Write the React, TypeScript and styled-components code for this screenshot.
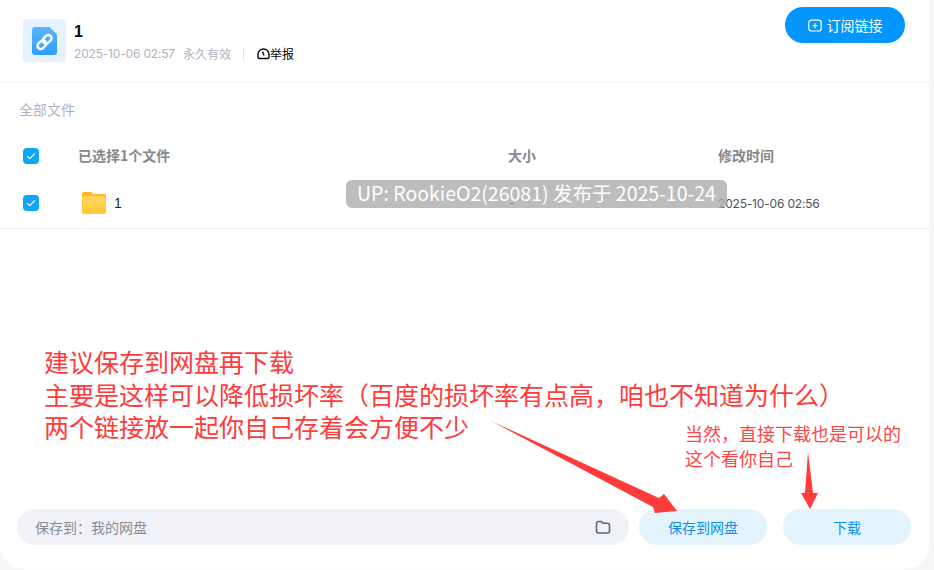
import React from "react";
import styled, { createGlobalStyle } from "styled-components";

const Global = createGlobalStyle`
  html, body { margin: 0; padding: 0; background: #f7f7f8; }
  body { font-family: "Noto Sans CJK SC", "Liberation Sans", sans-serif; }
  * { box-sizing: border-box; }
`;
const Page = styled.div`
  position: relative;
  width: 934px;
  height: 570px;
  overflow: hidden;
`;
const Card = styled.div`
  width: 929px;
  height: 569px;
  background: #fff;
  border-radius: 0 0 24px 24px;
  display: flex;
  flex-direction: column;
`;
const Header = styled.header`
  height: 83px;
  flex: none;
  border-bottom: 1px solid #f1f2f7;
  padding: 19px 24px 0 23px;
  display: flex;
  align-items: flex-start;
  gap: 8px;
`;
const Tile = styled.div`
  width: 43px;
  height: 43px;
  flex: none;
  border-radius: 4px;
  background: #e4f3ff;
  display: flex;
  align-items: center;
  justify-content: center;
`;
const Info = styled.div`
  flex: 1;
  display: flex;
  flex-direction: column;
`;
const Title = styled.div`
  font: 700 16px/20px "Liberation Sans", sans-serif;
  color: #06070a;
  margin-top: 3px;
`;
const Meta = styled.div`
  margin-top: 4px;
  display: flex;
  align-items: center;
  font-size: 12px;
  line-height: 16px;
  color: #afb3bf;
`;
const MetaDate = styled.span`
  font-family: "Inter", "Noto Sans CJK SC", sans-serif;
  letter-spacing: -0.18px;
  margin-right: 8px;
`;
const Divider = styled.i`
  width: 1px;
  height: 12px;
  background: #e0e2e8;
  margin: 0 13px 0 12px;
`;
const Report = styled.span`
  color: #06070a;
  display: inline-flex;
  align-items: center;
`;
const Subscribe = styled.button`
  width: 120px;
  height: 36px;
  margin-top: -12px;
  border: 0;
  border-radius: 18px;
  background: #0396ff;
  color: #fff;
  font: 400 14px "Noto Sans CJK SC", sans-serif;
  display: flex;
  align-items: center;
  justify-content: center;
  gap: 5px;
  padding: 0;
`;
const Crumb = styled.div`
  padding: 16px 0 0 19px;
  height: 54px;
  flex: none;
  font-size: 14px;
  line-height: 20px;
  color: #afb3bf;
`;
const Row = styled.div<{ $h: number; $top?: number; $line?: boolean }>`
  height: ${(p) => p.$h}px;
  flex: none;
  display: grid;
  grid-template-columns: 55px 430px 210px 1fr;
  align-items: center;
  padding: ${(p) => p.$top ?? 0}px 0 0 23px;
  ${(p) => (p.$line ? "border-bottom: 1px solid #f1f2f7;" : "")}
`;
const Check = styled.span`
  width: 16px;
  height: 16px;
  border-radius: 4px;
  background: #0ea5fb;
  display: flex;
  align-items: center;
  justify-content: center;
`;
const HeadCell = styled.div`
  font-size: 14px;
  line-height: 20px;
  font-weight: 700;
  color: #85888f;
  margin-top: -1px;
`;
const NameCell = styled.div`
  display: flex;
  align-items: center;
  gap: 8px;
  padding-left: 4px;
  font: 400 14px "Liberation Sans", sans-serif;
  color: #1f2433;
`;
const FileName = styled.span`
  margin-top: -1px;
`;
const SizeCell = styled.div`
  font: 400 12px "Liberation Sans", sans-serif;
  color: #1f2433;
  padding-left: 2px;
`;
const TimeCell = styled.div`
  font: 400 12px "Inter", sans-serif;
  letter-spacing: -0.18px;
  color: #4c5364;
`;
const Spacer = styled.div`
  flex: 1;
`;
const Footer = styled.footer`
  height: 60px;
  flex: none;
  padding: 0 18px 24px 17px;
  display: flex;
  align-items: stretch;
`;
const PathBox = styled.div`
  flex: 1;
  border-radius: 18px;
  background: #f1f2f7;
  display: flex;
  align-items: center;
  justify-content: space-between;
  padding: 0 18px;
  font-size: 14px;
  color: #878b96;
`;
const Action = styled.button<{ $gap: number }>`
  width: 128px;
  margin-left: ${(p) => p.$gap}px;
  border: 0;
  border-radius: 18px;
  background: #e3f4ff;
  color: #0a8cf0;
  font: 400 14px "Noto Sans CJK SC", sans-serif;
  padding: 0;
`;
const Watermark = styled.div`
  position: absolute;
  left: 346px;
  top: 180px;
  width: 381px;
  height: 28px;
  border-radius: 6px;
  background: rgba(170, 170, 170, 0.78);
  color: #fff;
  font: 400 19.5px/25px "Noto Sans CJK SC", sans-serif;
  text-align: center;
  white-space: nowrap;
`;
const NoteBig = styled.div`
  position: absolute;
  left: 44px;
  top: 345px;
  font-size: 25px;
  font-weight: 400;
  line-height: 32.5px;
  color: #ff3b3b;
  white-space: nowrap;
`;
const NoteSmall = styled.div`
  position: absolute;
  left: 685px;
  top: 421px;
  font-size: 18px;
  font-weight: 400;
  line-height: 24.5px;
  color: #ff4444;
  white-space: nowrap;
`;
const Arrows = styled.svg`
  position: absolute;
  left: 0;
  top: 0;
  pointer-events: none;
`;

const Tick = () => (
  <svg width="10" height="8" viewBox="0 0 10 8" fill="none">
    <path d="M1.2 4.2 3.8 6.6 8.8 1.4" stroke="#fff" strokeWidth="1.2" />
  </svg>
);

export default function App() {
  return (
    <Page>
      <Global />
      <Card>
        <Header>
          <Tile>
            <svg width="25" height="28" viewBox="0 0 25 28">
              <defs>
                <linearGradient id="doc" x1="0" y1="0" x2="0" y2="1">
                  <stop offset="0" stopColor="#5cb6ff" />
                  <stop offset="1" stopColor="#2f9cff" />
                </linearGradient>
              </defs>
              <path d="M3 0H17.500L25 7.500V25a3 3 0 0 1-3 3H3a3 3 0 0 1-3-3V3a3 3 0 0 1 3-3Z" fill="url(#doc)" />
              <g fill="none" stroke="#fff" strokeWidth="2.500" transform="rotate(-45 12.500 15)">
                <rect x="4" y="11.800" width="9.500" height="6.400" rx="3.200" />
                <rect x="11.500" y="11.800" width="9.500" height="6.400" rx="3.200" />
              </g>
            </svg>
          </Tile>
          <Info>
            <Title>1</Title>
            <Meta>
              <MetaDate>2025-10-06 02:57</MetaDate>
              永久有效
              <Divider />
              <Report>
                <svg width="13" height="12" viewBox="0 0 13 12" fill="none" stroke="#06070a" strokeWidth="1.400">
                  <path d="M2.500 10.500H10.500A1.500 1.500 0 0 0 12 9V6.500a5.500 5.500 0 0 0-11 0V9A1.500 1.500 0 0 0 2.500 10.500Z" />
                  <path d="M5.500 3.500 7 7.500" />
                </svg>
                举报
              </Report>
            </Meta>
          </Info>
          <Subscribe>
            <svg width="14" height="13" viewBox="0 0 14 13" fill="none" stroke="#fff" strokeWidth="1.200">
              <rect x="0.800" y="1.200" width="12.400" height="10.800" rx="2.500" />
              <path d="M7 4.200v5M4.500 6.700h5" />
            </svg>
            订阅链接
          </Subscribe>
        </Header>
        <Crumb>全部文件</Crumb>
        <Row $h={37}>
          <Check><Tick /></Check>
          <HeadCell>已选择1个文件</HeadCell>
          <HeadCell>大小</HeadCell>
          <HeadCell>修改时间</HeadCell>
        </Row>
        <Row $h={55} $top={4} $line>
          <Check><Tick /></Check>
          <NameCell>
            <svg width="24" height="22" viewBox="0 0 24 22">
              <defs>
                <linearGradient id="fold" x1="0" y1="0" x2="0" y2="1">
                  <stop offset="0" stopColor="#ffdb63" />
                  <stop offset="1" stopColor="#ffc832" />
                </linearGradient>
              </defs>
              <path d="M2 0H9l2 2H22a2 2 0 0 1 2 2V8H0V2a2 2 0 0 1 2-2Z" fill="#ffb42c" />
              <rect x="0" y="3.500" width="24" height="18.500" rx="2.500" fill="#ffc53a" />
              <rect x="1" y="4.500" width="22" height="16.500" rx="2" fill="url(#fold)" />
            </svg>
            <FileName>1</FileName>
          </NameCell>
          <SizeCell>-</SizeCell>
          <TimeCell>2025-10-06 02:56</TimeCell>
        </Row>
        <Spacer />
        <Footer>
          <PathBox>
            保存到：我的网盘
            <svg width="16" height="15" viewBox="0 0 16 15" fill="none" stroke="#5f6675" strokeWidth="1.600">
              <path d="M1.500 3.500A2 2 0 0 1 3.500 1.500h2.800L8 3.200h4.500a2 2 0 0 1 2 2V11a2 2 0 0 1-2 2h-9a2 2 0 0 1-2-2Z" />
            </svg>
          </PathBox>
          <Action $gap={10}>保存到网盘</Action>
          <Action $gap={16}>下载</Action>
        </Footer>
      </Card>
      <Watermark>UP: RookieO2(26081) 发布于 2025-10-24</Watermark>
      <NoteBig>
        建议保存到网盘再下载
        <br />
        主要是这样可以降低损坏率（百度的损坏率有点高，咱也不知道为什么）
        <br />
        两个链接放一起你自己存着会方便不少
      </NoteBig>
      <NoteSmall>
        当然，直接下载也是可以的
        <br />
        这个看你自己
      </NoteSmall>
      <Arrows width="934" height="570" viewBox="0 0 934 570">
        <path d="M491 421 659 498 664 494 677 511 655 513 653 507Z" fill="#ff3b3b" />
        <path d="M808 452 813 493 818 493 810 509 801 493 805 493Z" fill="#ff3b3b" />
      </Arrows>
    </Page>
  );
}
